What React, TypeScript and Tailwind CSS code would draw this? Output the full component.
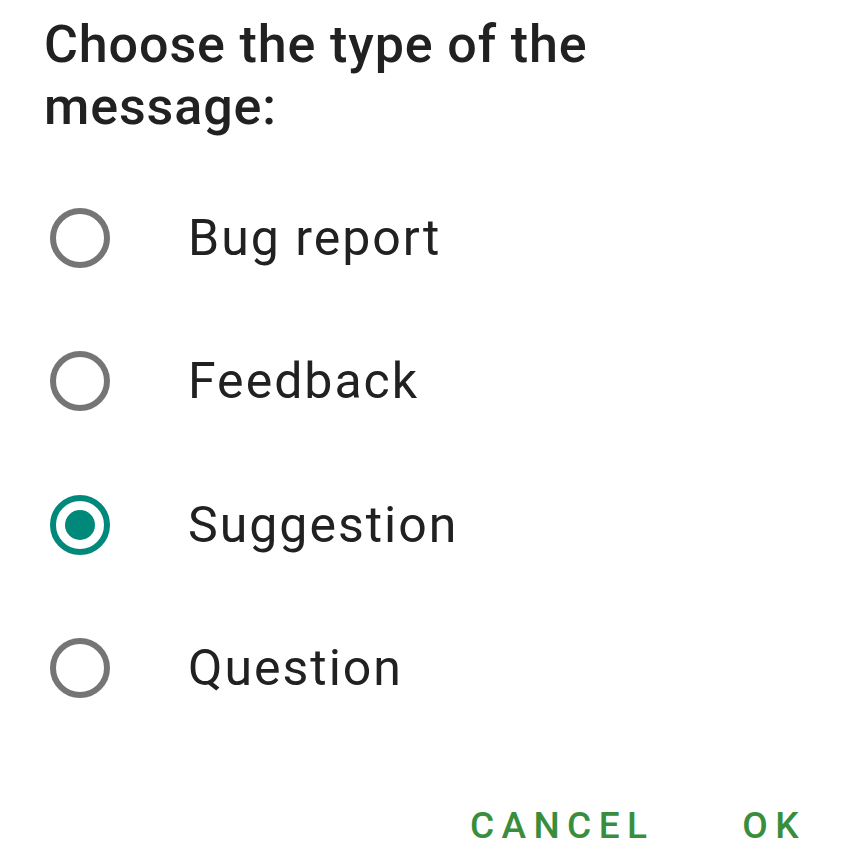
import React, { useState } from 'react'

const options = ['Bug report', 'Feedback', 'Suggestion', 'Question']

function Radio({ checked }: { checked: boolean }) {
  return (
    <span
      className={
        checked
          ? 'flex h-[60px] w-[60px] items-center justify-center rounded-full border-[6px] border-[#00897b]'
          : 'flex h-[60px] w-[60px] items-center justify-center rounded-full border-[6px] border-[#757575]'
      }
    >
      {checked && <span className="h-[30px] w-[30px] rounded-full bg-[#00897b]" />}
    </span>
  )
}

export default function App() {
  const [selected, setSelected] = useState('Suggestion')

  return (
    <div
      className="flex h-[857px] w-[862px] flex-col bg-white text-[#212121]"
      style={{ fontFamily: 'Roboto, "Noto Sans", sans-serif' }}
    >
      <h1 className="pl-[44px] pr-[40px] pt-[14px] text-[52px] font-medium leading-[62px] tracking-[0.017em]">
        Choose the type of the
        <br />
        message:
      </h1>
      <ul className="mt-[28px] flex flex-col">
        {options.map((opt) => (
          <li
            key={opt}
            className="flex h-[143.5px] cursor-pointer items-center pl-[50px]"
            onClick={() => setSelected(opt)}
          >
            <Radio checked={selected === opt} />
            <span className="ml-[78px] text-[50px] leading-[60px] tracking-[0.04em]">{opt}</span>
          </li>
        ))}
      </ul>
      <div className="mt-[62px] flex justify-end gap-[88px] pr-[56px]">
        <button
          type="button"
          className="text-[37px] font-medium uppercase leading-[48px] tracking-[0.2em] text-[#388e3c]"
        >
          Cancel
        </button>
        <button
          type="button"
          className="text-[37px] font-medium uppercase leading-[48px] tracking-[0.2em] text-[#388e3c]"
        >
          OK
        </button>
      </div>
    </div>
  )
}
